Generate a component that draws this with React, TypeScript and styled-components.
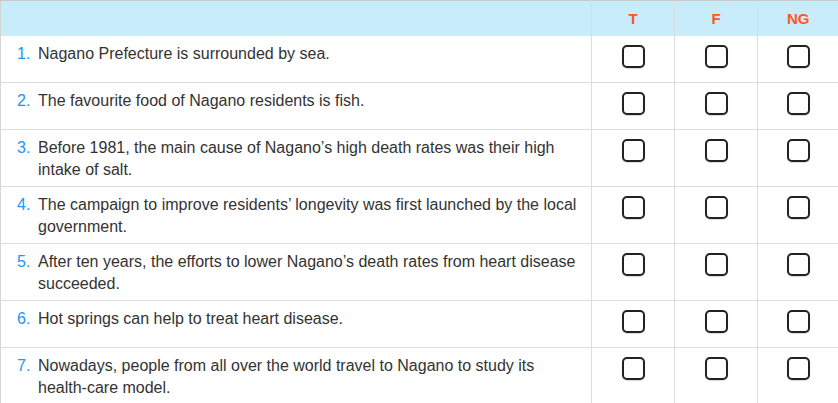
import { ReactElement } from "react";
import styled, { createGlobalStyle } from "styled-components";

const questions = [
  "Nagano Prefecture is surrounded by sea.",
  "The favourite food of Nagano residents is fish.",
  "Before 1981, the main cause of Nagano’s high death rates was their high intake of salt.",
  "The campaign to improve residents’ longevity was first launched by the local government.",
  "After ten years, the efforts to lower Nagano’s death rates from heart disease succeeded.",
  "Hot springs can help to treat heart disease.",
  "Nowadays, people from all over the world travel to Nagano to study its health-care model.",
];

const options = ["T", "F", "NG"];

const GlobalStyle = createGlobalStyle`
  body {
    margin: 0;
    background: #fff;
    font-family: Arial, "Liberation Sans", sans-serif;
  }
`;

export default function App(): ReactElement {
  return (
    <>
      <GlobalStyle />
      <Table>
        <colgroup>
          <col style={{ width: 591 }} />
          <col style={{ width: 83 }} />
          <col style={{ width: 83 }} />
          <col style={{ width: 81 }} />
        </colgroup>
        <thead>
          <tr>
            <HeadCell />
            {options.map((o) => (
              <HeadCell key={o}>{o}</HeadCell>
            ))}
          </tr>
        </thead>
        <tbody>
          {questions.map((q, i) => (
            <tr key={i}>
              <QuestionCell>
                <Item>
                  <Num>{i + 1}.</Num>
                  <span>{q}</span>
                </Item>
              </QuestionCell>
              {options.map((o) => (
                <BoxCell key={o}>
                  <Box type="checkbox" aria-label={o} />
                </BoxCell>
              ))}
            </tr>
          ))}
        </tbody>
      </Table>
    </>
  );
}

const Table = styled.table`
  width: 838px;
  table-layout: fixed;
  border-collapse: collapse;
  border-top: 1px solid #c8c8c8;
  border-left: 1px solid #d4d4d4;
`;

const HeadCell = styled.th`
  height: 35px;
  padding: 0;
  background: #c9ecfb;
  color: #ff5722;
  font-size: 15px;
  font-weight: bold;
  text-align: center;
  border-left: 1px solid #dcdcdc;
  &:first-child {
    border-left: 0;
  }
`;

const QuestionCell = styled.td`
  padding: 7px 10px 5px 16px;
  vertical-align: top;
  border-bottom: 1px solid #dcdcdc;
  font-size: 16px;
  line-height: 22px;
  color: #333;
`;

const Item = styled.div`
  display: flex;
`;

const Num = styled.span`
  flex: 0 0 21px;
  color: #2196f3;
`;

const BoxCell = styled.td`
  padding: 9px 0 14px;
  vertical-align: top;
  text-align: center;
  border-left: 1px solid #dcdcdc;
  border-bottom: 1px solid #dcdcdc;
`;

const Box = styled.input`
  appearance: none;
  display: block;
  margin: 0 auto;
  width: 23px;
  height: 23px;
  border: 2px solid #222;
  border-radius: 5px;
  background: #fff;
  box-sizing: border-box;
  box-shadow: 0 1px 1px rgba(0, 0, 0, 0.15);
  cursor: pointer;
`;
